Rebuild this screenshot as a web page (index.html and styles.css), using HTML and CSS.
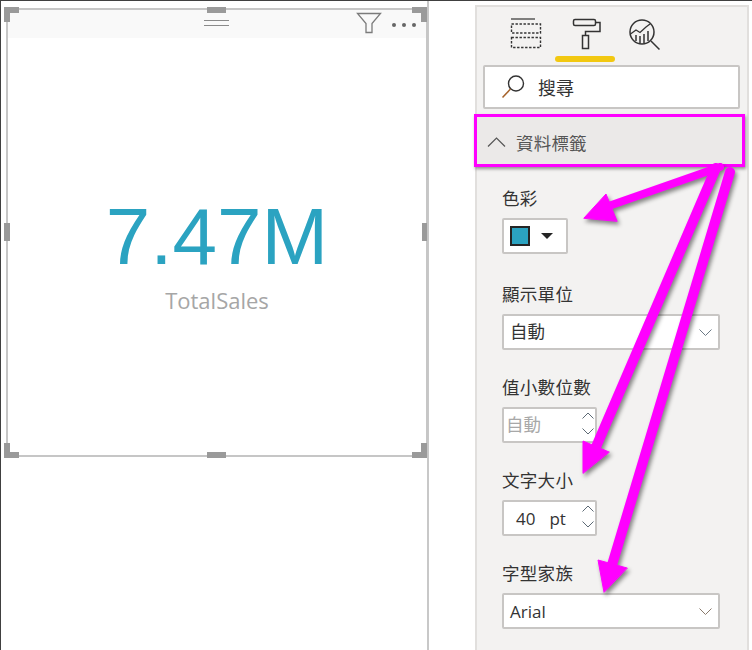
FILE: index.html
```html
<!doctype html>
<html>
  <head>
    <meta charset="utf-8">
    <title>資料標籤</title>
    <link rel="stylesheet" href="styles.css">
  </head>

  <body>
    <div class="page">

      <div class="canvas">
        <div class="card">
          <div class="cardHeader">
            <div class="grip"></div>
            <svg class="filterIcon" width="26" height="22" viewBox="0 0 26 22">
              <path d="M1.5 1.5H24.5L16 11.5V20.5H10V11.5Z" fill="none" stroke="#7b7b7b" stroke-width="1.3"/>
            </svg>
            <div class="dots"><span></span><span></span><span></span></div>
          </div>
          <div class="cardBody">
            <div class="bigValue">7.47M</div>
            <div class="bigLabel">TotalSales</div>
          </div>
          <i class="handle cornerTL"></i>
          <i class="handle cornerTR"></i>
          <i class="handle cornerBL"></i>
          <i class="handle cornerBR"></i>
          <i class="handle midTop"></i>
          <i class="handle midBottom"></i>
          <i class="handle midLeft"></i>
          <i class="handle midRight"></i>
        </div>
      </div>

      <div class="panel">
        <div class="tabs">
          <svg class="tabIcon" width="34" height="34" viewBox="0 0 34 34">
            <path d="M3 2H27" stroke="#333" stroke-width="1.2"/>
            <rect x="3.5" y="7" width="29" height="9" fill="none" stroke="#333" stroke-width="1.4" stroke-dasharray="2.4 1.6"/>
            <rect x="3.5" y="20.5" width="29" height="10" fill="none" stroke="#333" stroke-width="1.4" stroke-dasharray="2.4 1.6"/>
          </svg>
          <div class="activeTab">
            <svg class="tabIcon" width="34" height="34" viewBox="0 0 34 34">
              <rect x="3.5" y="2.5" width="22" height="6" rx="1.5" fill="none" stroke="#333" stroke-width="1.5"/>
              <path d="M25.5 5.5H30V14.5H15.5V18.5" fill="none" stroke="#333" stroke-width="1.5"/>
              <rect x="12.5" y="18.5" width="6" height="13" fill="none" stroke="#333" stroke-width="1.5"/>
            </svg>
          </div>
          <svg class="tabIcon" width="34" height="34" viewBox="0 0 34 34">
            <circle cx="14" cy="15" r="12" fill="none" stroke="#333" stroke-width="1.5"/>
            <path d="M23 24L31.5 32.5" stroke="#333" stroke-width="1.5"/>
            <path d="M2.5 17L8 13L12 15.5L18 10L22 7" fill="none" stroke="#333" stroke-width="1.3"/>
            <path d="M8 18V24M12 19V26M16 17V26M20 14V24" stroke="#333" stroke-width="1.5"/>
          </svg>
        </div>

        <div class="search">
          <svg width="26" height="26" viewBox="0 0 26 26">
            <circle cx="16" cy="9.5" r="7.5" fill="none" stroke="#333" stroke-width="1.4"/>
            <path d="M10.5 15L2.5 23.5" stroke="#a5622a" stroke-width="1.5"/>
          </svg>
          <span>搜尋</span>
        </div>

        <div class="sectionHead">
          <svg width="19" height="10" viewBox="0 0 19 10">
            <path d="M1 9.5L9.5 1L18 9.5" fill="none" stroke="#555" stroke-width="1.2"/>
          </svg>
          <span>資料標籤</span>
        </div>

        <div class="fields">
          <div class="field fieldFirst">
            <div class="fieldLabel">色彩</div>
            <div class="control colorPick">
              <span class="swatch"></span>
              <span class="caret"></span>
            </div>
          </div>

          <div class="field">
            <div class="fieldLabel">顯示單位</div>
            <div class="control select">
              <span class="cjkValue">自動</span>
              <svg width="13" height="7" viewBox="0 0 13 7"><path d="M.5 .5L6.500 6.500L12.500 .5" fill="none" stroke="#6c7a86" stroke-width="1"/></svg>
            </div>
          </div>

          <div class="field">
            <div class="fieldLabel">值小數位數</div>
            <div class="control number">
              <span class="cjkValue muted">自動</span>
              <div class="stepper">
                <svg width="12" height="7" viewBox="0 0 12 7"><path d="M.5 6.500L6 1L11.500 6.500" fill="none" stroke="#5d6a75" stroke-width="1"/></svg>
                <svg width="12" height="7" viewBox="0 0 12 7"><path d="M.5 .5L6 6L11.500 .5" fill="none" stroke="#5d6a75" stroke-width="1"/></svg>
              </div>
            </div>
          </div>

          <div class="field">
            <div class="fieldLabel">文字大小</div>
            <div class="control number">
              <span class="sizeValue">40</span>
              <span class="sizeUnit">pt</span>
              <div class="stepper">
                <svg width="12" height="7" viewBox="0 0 12 7"><path d="M.5 6.500L6 1L11.500 6.500" fill="none" stroke="#5d6a75" stroke-width="1"/></svg>
                <svg width="12" height="7" viewBox="0 0 12 7"><path d="M.5 .5L6 6L11.500 .5" fill="none" stroke="#5d6a75" stroke-width="1"/></svg>
              </div>
            </div>
          </div>

          <div class="field">
            <div class="fieldLabel">字型家族</div>
            <div class="control select">
              <span class="fontName">Arial</span>
              <svg width="13" height="7" viewBox="0 0 13 7"><path d="M.5 .5L6.500 6.500L12.500 .5" fill="none" stroke="#8a7a6c" stroke-width="1"/></svg>
            </div>
          </div>
        </div>
      </div>

    </div>

    <svg class="arrows" width="752" height="650" viewBox="0 0 752 650">
      <g fill="#ff00ff" stroke="#ff00ff" stroke-linecap="round">
        <path d="M720 167L603 208" fill="none" stroke-width="8"/>
        <path d="M584 218L606 194L617 221Z" stroke-width="1"/>
        <path d="M716 168L596 447" fill="none" stroke-width="10"/>
        <path d="M583 473L583 441L609 452Z" stroke-width="1"/>
        <path d="M730 172L612 565" fill="none" stroke-width="10"/>
        <path d="M604 592L598 560L627 568Z" stroke-width="1"/>
      </g>
    </svg>
  </body>
</html>
```

FILE: styles.css
```css
* {
  box-sizing:border-box;
}

html, body {
  margin:0;
  height:650px;
  overflow:hidden;
  background-color:#fff;
}

body {
  position:relative;
  font-family:"Noto Sans CJK TC", "Liberation Sans", sans-serif;
  color:#333;
  border-top:1px solid #404040;
}

.page {
  display:flex;
  height:649px;
}

/* report canvas */
.canvas {
  width:429px;
  padding:7px 0 0 5px;
  background-color:#fff;
  border-left:1px solid #404040;
  border-right:2px solid #c8c8c8;
}

.card {
  position:relative;
  width:422px;
  height:449px;
  border:2px solid #c6c6c6;
  display:flex;
  flex-direction:column;
}

.cardHeader {
  position:relative;
  flex:none;
  height:28px;
  background-color:#f9f9f9;
}

.grip {
  position:absolute;
  left:196px;
  top:10px;
  width:25px;
  height:6px;
  border-top:1px solid #8a8a8a;
  border-bottom:1px solid #8a8a8a;
}

.filterIcon {
  position:absolute;
  left:348px;
  top:2px;
}

.dots {
  position:absolute;
  left:384px;
  top:13px;
  display:flex;
  gap:6px;
}

.dots span {
  width:4px;
  height:4px;
  border-radius:50%;
  background-color:#666;
}

.cardBody {
  flex:1;
  display:flex;
  flex-direction:column;
  align-items:center;
  padding-top:154px;
}

.bigValue {
  font-family:"Liberation Sans", sans-serif;
  font-size:80px;
  line-height:90px;
  color:#2ba3c1;
}

.bigLabel {
  font-family:"Open Sans", sans-serif;
  font-size:22px;
  line-height:30px;
  margin-top:3px;
  color:#a6a6a6;
}

.handle {
  position:absolute;
  background-color:#9a9a9a;
}

.cornerTL, .cornerTR, .cornerBL, .cornerBR {
  width:15px;
  height:15px;
  background-color:transparent;
  border:0 solid #9a9a9a;
}

.cornerTL { left:-4px; top:-3px; border-width:6px 0 0 6px; }
.cornerTR { right:-1px; top:-3px; border-width:6px 6px 0 0; }
.cornerBL { left:-4px; bottom:-3px; border-width:0 0 6px 6px; }
.cornerBR { right:-1px; bottom:-3px; border-width:0 6px 6px 0; }

.midTop, .midBottom { left:199px; width:19px; height:6px; }
.midTop { top:-3px; }
.midBottom { bottom:-3px; }
.midLeft, .midRight { top:213px; width:6px; height:18px; }
.midLeft { left:-4px; }
.midRight { right:-1px; width:5px; }

/* format pane */
.panel {
  width:274px;
  margin-left:46px;
  margin-top:4px;
  height:645px;
  background-color:#f3f2f1;
  border:2px solid #e1dfdd;
  border-bottom:none;
}

.tabs {
  display:flex;
  align-items:flex-start;
  height:58px;
  padding:10px 0 0 31px;
  gap:26px;
}

.tabIcon {
  display:block;
}

.activeTab {
  width:60px;
  height:49px;
  padding-left:15px;
  margin-left:-13px;
  margin-right:-13px;
  position:relative;
}

.activeTab::after {
  content:"";
  position:absolute;
  left:0;
  top:39px;
  width:60px;
  height:6px;
  border-radius:3px;
  background-color:#f2c811;
}

.search {
  display:flex;
  align-items:center;
  gap:12px;
  width:257px;
  height:44px;
  margin-left:6px;
  padding-left:15px;
  background-color:#fff;
  border:2px solid #c8c6c4;
  border-radius:2px;
  font-size:18px;
}

.sectionHead {
  position:relative;
  display:flex;
  align-items:center;
  gap:10px;
  width:271px;
  height:53px;
  margin:5px 0 0 -3px;
  padding:3px 0 0 10px;
  background-color:#ebe9e8;
  border:3px solid #ff00ff;
  box-shadow:1px 2px 3px rgba(0,0,0,.4);
  font-size:17.500px;
  letter-spacing:.2px;
  color:#555;
}

.fields {
  padding:19px 0 0 25px;
}

.field {
  margin-bottom:25px;
}

.fieldFirst {
  margin-bottom:28px;
}

.fieldLabel {
  height:24px;
  line-height:24px;
  font-size:17.500px;
  letter-spacing:.3px;
  margin-bottom:8px;
}

.control {
  display:flex;
  align-items:center;
  height:36px;
  background-color:#fff;
  border:2px solid #c8c6c4;
  border-radius:2px;
  font-size:17.500px;
}

.cjkValue {
  margin-left:-1px;
  padding-bottom:4px;
}

.colorPick {
  width:66px;
  padding-left:6px;
}

.swatch {
  width:20px;
  height:20px;
  background-color:#2ba3c1;
  border:2px solid #252525;
}

.caret {
  margin-left:11px;
  border-left:6px solid transparent;
  border-right:6px solid transparent;
  border-top:6px solid #252525;
}

.select {
  width:218px;
  justify-content:space-between;
  padding:0 6px 0 7px;
}

.number {
  position:relative;
  width:95px;
  padding-left:3px;
}

.muted {
  color:#a8a8a8;
}

.sizeValue {
  margin-left:9px;
  font-family:"Open Sans", sans-serif;
  font-size:17px;
}

.sizeUnit {
  margin-left:14px;
  font-family:"Open Sans", sans-serif;
  font-size:17px;
}

.fontName {
  margin-left:-1px;
  font-family:"Open Sans", sans-serif;
  font-size:17px;
}

.stepper {
  position:absolute;
  right:1px;
  top:3px;
  display:flex;
  flex-direction:column;
  gap:9px;
}

.stepper svg {
  display:block;
}

/* callouts drawn on top of the screenshot */
.arrows {
  position:absolute;
  left:0;
  top:-1px;
  filter:drop-shadow(2px 3px 2px rgba(0,0,0,.45));
}
```
